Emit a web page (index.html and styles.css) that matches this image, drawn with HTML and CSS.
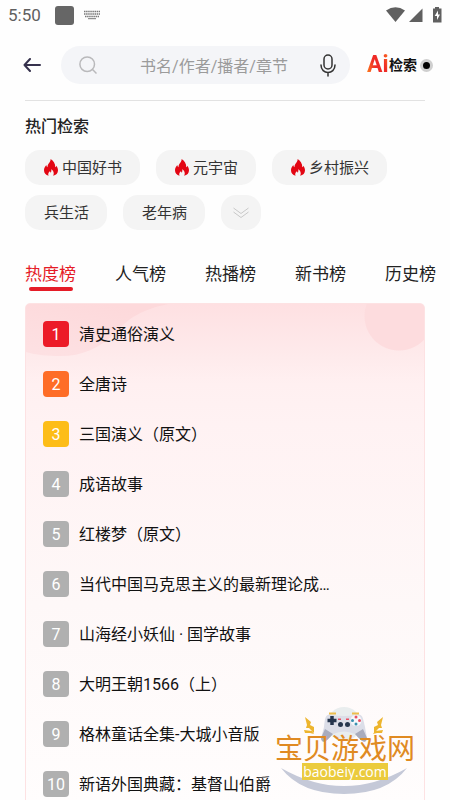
FILE: index.html
```html
<!DOCTYPE html>
<html lang="zh-CN">
<head>
<meta charset="utf-8">
<meta name="viewport" content="width=device-width, initial-scale=1">
<title>热门检索</title>
<link rel="stylesheet" href="styles.css">
</head>
<body>
<svg class="defs" aria-hidden="true">
  <symbol id="flame" viewBox="0 0 14 17">
    <path d="M6.6 0C7 3 3.4 4.600 3.500 8.300 2.700 7.800 2.400 7 2.400 6 .9 7.500 0 9.300 0 11.200 0 13.900 1.700 16 4.600 16.800 3.600 15 4.600 13.200 6 12.300 6.100 13 6.400 13.400 6.900 13.700 7.300 12.800 7.500 11.600 7.200 10.300 9.500 11.600 10.600 14.800 9 16.800 12.200 16.200 14 14 14 11.200 14 9.400 13.200 7.900 12.400 6.700 12.200 7.500 11.900 8 11.300 8.300 11.400 4.700 9.500 1.600 6.600 0Z"/>
  </symbol>
</svg>
<div class="app">
  <div class="status">
    <span class="clock">5:50</span>
    <span class="notice"></span>
    <svg class="keyboard" width="16" height="10" viewBox="0 0 16 10">
      <path d="M0 1.500h16M0 4h16M1 6.500h14" stroke="#777" stroke-width="1.500" stroke-dasharray="1.500 .6" fill="none"/>
      <path d="M4 8.700h8" stroke="#777" stroke-width="1"/>
    </svg>
    <svg class="signals" width="56" height="16" viewBox="0 0 56 16" fill="#606060">
      <path d="M0 3.500Q9.500-3 19 3.500L9.500 15Z"/>
      <path d="M36.500 1.500V15H23Z"/>
      <path d="M47 1.500h2V0h4v1.500h2.500V15.500H47Z"/>
      <path d="M52 3.500 48.700 9H51v4l3-5.500h-2Z" fill="#fff"/>
    </svg>
  </div>

  <header class="header">
    <button class="back" aria-label="返回">
      <svg width="18" height="14" viewBox="0 0 18 14" fill="none" stroke="#36324d" stroke-width="2" stroke-linecap="round" stroke-linejoin="round"><path d="M17 7H1.500M7 1 1.500 7 7 13"/></svg>
    </button>
    <form class="search">
      <svg width="18" height="18" viewBox="0 0 18 18" fill="none" stroke="#b9b9bb" stroke-width="1.500"><circle cx="8.200" cy="8.200" r="7.300"/><path d="m13.300 13.300 4.200 4.200"/></svg>
      <input type="text" aria-label="检索" placeholder="书名/作者/播者/章节">
      <button type="button" class="mic" aria-label="语音">
        <svg width="16" height="23" viewBox="0 0 16 23" fill="none" stroke="#333" stroke-width="1.500" stroke-linecap="round"><rect x="4" y="1" width="8" height="14" rx="4"/><path d="M1 11c0 10 14 10 14 0M8 18.500V22"/></svg>
      </button>
    </form>
    <button class="ai"><span class="ai-mark">Ai</span><span class="ai-text">检索</span><span class="ai-dot"></span></button>
  </header>

  <section class="hot">
    <h2>热门检索</h2>
    <div class="chips">
      <button class="chip"><svg class="flame"><use href="#flame"/></svg>中国好书</button>
      <button class="chip"><svg class="flame"><use href="#flame"/></svg>元宇宙</button>
      <button class="chip"><svg class="flame"><use href="#flame"/></svg>乡村振兴</button>
      <button class="chip">兵生活</button>
      <button class="chip">老年病</button>
      <button class="chip more" aria-label="更多"><svg width="16" height="12" viewBox="0 0 16 12" fill="none" stroke="#c8c8c8" stroke-width="1"><path d="m.5 1 7.500 5.500L15.500 1M.5 5 8 10.500 15.500 5"/></svg></button>
    </div>
  </section>

  <nav class="tabs">
    <a href="#hot" class="active">热度榜</a>
    <a href="#people">人气榜</a>
    <a href="#play">热播榜</a>
    <a href="#new">新书榜</a>
    <a href="#history">历史榜</a>
  </nav>

  <section class="card" id="hot">
    <svg class="wave" width="142" height="54" viewBox="0 0 142 54" aria-hidden="true">
      <defs><linearGradient id="pink" x1="0" y1="1" x2=".6" y2="0"><stop offset="0" stop-color="#fde1e3"/><stop offset="1" stop-color="#fdd9db"/></linearGradient></defs>
      <path d="M0 0H142C115 6 103 14 91 27 74 45 55 52 35 52 22 52 10 51 0 48Z" fill="url(#pink)"/>
    </svg>
    <ol class="rank">
      <li><span class="num first">1</span><span class="name">清史通俗演义</span></li>
      <li><span class="num second">2</span><span class="name">全唐诗</span></li>
      <li><span class="num third">3</span><span class="name">三国演义（原文）</span></li>
      <li><span class="num">4</span><span class="name">成语故事</span></li>
      <li><span class="num">5</span><span class="name">红楼梦（原文）</span></li>
      <li><span class="num">6</span><span class="name">当代中国马克思主义的最新理论成…</span></li>
      <li><span class="num">7</span><span class="name">山海经小妖仙 · 国学故事</span></li>
      <li><span class="num">8</span><span class="name">大明王朝1566（上）</span></li>
      <li><span class="num">9</span><span class="name">格林童话全集-大城小音版</span></li>
      <li><span class="num">10</span><span class="name">新语外国典藏：基督山伯爵</span></li>
    </ol>
  </section>

  <div class="watermark">
    <svg class="art" width="140" height="92" viewBox="0 0 140 92">
      <circle cx="69" cy="17" r="17" fill="#e9edee"/>
      <path d="M6 61Q69 97 132 61 112 87 69 87 26 87 6 61Z" fill="#c5c9d8"/>
      <path d="M57 8Q69 10 81 8C88 6 88 12 90 20L92 31C91 38 86 34 80 27Q69 22 58 27C52 34 47 38 46 31L49 20C50 12 50 6 57 8Z" fill="#dcdee8"/>
      <path d="M50 22 46 31C47 38 52 34 58 27ZM88 22 92 31C91 38 86 34 80 27Z" fill="#a9acbd"/>
      <path d="M54 6.500h7M77 6.500h7" stroke="#edbd4c" stroke-width="2"/>
      <path d="M57 9v9M52.500 13.500h9" stroke="#25354d" stroke-width="3.500"/>
      <g fill="#26364d"><circle cx="65.500" cy="17.500" r="2.500"/><circle cx="72.500" cy="17.500" r="2.500"/></g>
      <circle cx="81" cy="13.500" r="5.500" fill="#f6f7fb"/>
      <g fill="#e84f63"><circle cx="81" cy="10" r="1.500"/><circle cx="84.500" cy="13.500" r="1.500"/><path d="M63 11.500h3v1.500h-3zM71 11.500h3v1.500h-3z"/></g>
      <g fill="#3b91b0"><circle cx="77.500" cy="13.500" r="1.500"/><circle cx="81" cy="17" r="1.500"/></g>
      <path d="m30 10 6 5-1 3 4 2 0 6-5-5-3 0 1-3ZM29 23l8 1 2 3-4-1-5 0ZM108 10l-6 5 1 3-4 2 0 6 5-5 3 0-1-3ZM108 23l-8 1-2 3 4-1 5 0Z" fill="#edb52e"/>
    </svg>
    <span class="mark-name">宝贝游戏网</span>
    <span class="mark-url">baobeiy.com</span>
  </div>
</div>
</body>
</html>
```
FILE: styles.css
```css
* {
  box-sizing: border-box;
}

body {
  margin: 0;
  background: #fefefe;
  color: #222;
  font: 16px/24px Roboto, "Noto Sans CJK SC", sans-serif;
}

button,
input {
  border: 0;
  padding: 0;
  background: none;
  color: inherit;
  font: inherit;
}

.defs {
  position: absolute;
  width: 0;
  height: 0;
}

.app {
  position: relative;
  height: 100vh;
  overflow: hidden;
}

.status {
  display: flex;
  align-items: center;
  height: 30px;
  padding: 0 8px;
  color: #606060;
}

.clock {
  width: 47px;
  font-size: 17px;
}

.notice {
  width: 19px;
  height: 19px;
  margin-right: 10px;
  border-radius: 3px;
  background: #666;
}

.signals {
  margin-left: auto;
}

.header {
  display: flex;
  align-items: center;
  height: 70px;
  padding: 0 17px 0 23px;
}

.back {
  display: flex;
  width: 38px;
}

.search {
  display: flex;
  flex: 1;
  align-items: center;
  min-width: 0;
  height: 38px;
  padding: 0 14px 0 18px;
  border-radius: 19px;
  background: #f4f5f8;
}

.search input {
  flex: 1;
  min-width: 0;
  height: 28px;
  padding: 2px 0 0 26px;
  outline: 0;
  text-align: center;
}

.search input::placeholder {
  color: #9b9b9b;
}

.mic {
  display: flex;
  margin-left: 15px;
}

.ai {
  display: flex;
  align-items: center;
  margin-left: 17px;
}

.ai-mark {
  width: 22px;
  background: linear-gradient(70deg, #ff8a1c, #ef2b26 40%, #ef2b26 70%, #ff7b20);
  background-clip: text;
  color: transparent;
  font-size: 23px;
  font-weight: 700;
  text-align: left;
}

.ai-text {
  color: #111;
  font-size: 14px;
  font-weight: 700;
}

.ai-dot {
  width: 13px;
  height: 13px;
  margin-left: 3px;
  border: 3px solid #cfcfcf;
  border-radius: 50%;
  background: #000;
}

.hot {
  margin: 0 25px;
  border-top: 1px solid #e2e2e2;
}

.hot h2 {
  margin: 0;
  padding: 14px 0 11px;
  font-size: 16px;
  font-weight: 500;
}

.chips {
  display: flex;
  flex-wrap: wrap;
  gap: 10px 16px;
}

.chip {
  display: flex;
  align-items: center;
  height: 35px;
  padding: 0 18px 0 19px;
  border-radius: 15px;
  background: #f4f4f4;
  color: #333;
  font-size: 15px;
}

.flame {
  width: 14px;
  height: 17px;
  margin-right: 4px;
  fill: #e30613;
}

.more {
  width: 40px;
  padding: 0 12px;
}

.tabs {
  display: flex;
  gap: 39px;
  padding: 31px 25px 12px;
  white-space: nowrap;
}

.tabs a {
  flex: none;
  color: #222;
  font-size: 17px;
  line-height: 26px;
  text-decoration: none;
}

.tabs a::after {
  display: block;
  width: 44px;
  height: 4px;
  margin: 0 auto;
  border-radius: 2px;
  content: "";
}

.tabs .active {
  color: #e51c27;
}

.tabs .active::after {
  background: #e51c27;
}

.card {
  position: relative;
  margin: 0 25px;
  overflow: hidden;
  border: 1px solid #fde2e3;
  border-radius: 5px;
  background:
    radial-gradient(circle at calc(100% - 25px) 12px, #fddcde 34px, transparent 35px),
    linear-gradient(#fee0e2, #feebec 55px, #fff0f1 80px, #fff2f3 120px, #fef8f8 300px, #fffdfd 500px);
}

.wave {
  position: absolute;
  top: 0;
  left: 0;
}

.rank {
  position: relative;
  margin: 0;
  padding: 5px 17px;
  list-style: none;
}

.rank li {
  display: flex;
  align-items: center;
  height: 50px;
}

.num {
  width: 26px;
  height: 26px;
  margin-right: 10px;
  border-radius: 4px;
  background: #b0b0b0;
  color: #fff;
  line-height: 27px;
  text-align: center;
}

.first {
  background: #ec1b27;
}

.second {
  background: #fe6d27;
}

.third {
  background: #fdbd18;
}

.name {
  padding-top: 1px;
  color: #111;
  white-space: nowrap;
}

.watermark {
  position: absolute;
  right: 35px;
  bottom: 0;
  display: flex;
  flex-direction: column;
  align-items: center;
  gap: 2px;
  width: 140px;
  height: 95px;
  padding-top: 28px;
}

.art {
  position: absolute;
  top: 2px;
  left: 0;
}

.mark-name {
  position: relative;
  color: #e08a22;
  font: 28px/28px "Noto Sans CJK SC", sans-serif;
}

.mark-url {
  position: relative;
  width: 86px;
  background: #ebcb3d;
  color: #fff;
  font: 500 14px/17px "Open Sans", sans-serif;
  text-align: center;
}
```
